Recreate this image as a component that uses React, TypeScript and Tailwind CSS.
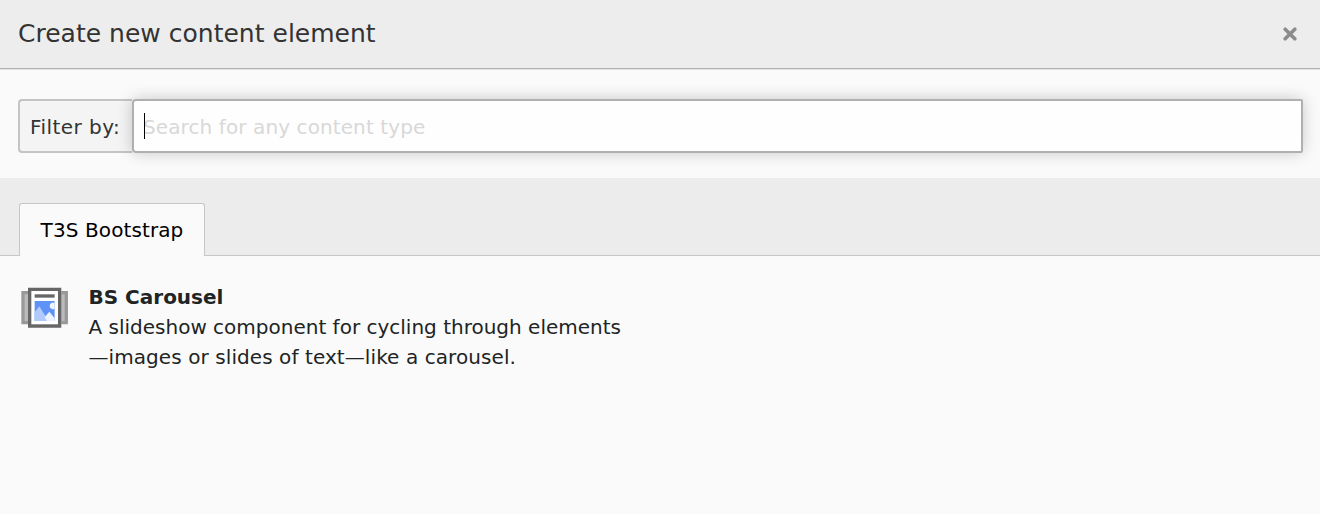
import React from 'react';

function CarouselIcon() {
  return (
    <svg viewBox="0 0 16 16" className="block size-[53.3px] shrink-0" aria-hidden="true">
      <path fill="#999" d="M1 3h2v10H1zM13 3h2v10h-2z" />
      <path fill="#bbb" d="M2 4h1v8H2zM13 4h1v8h-1z" />
      <path fill="#666" d="M3 2h10v12H3z" />
      <path fill="#fff" d="M4 3h8v10H4z" />
      <path fill="#666" d="M5 4h6v1H5z" />
      <path fill="#5E93F5" d="M5 6h6v6H5z" />
      <path fill="#B0CBFB" d="M5 9.4l1.4-1.8L9.2 12H5z" />
      <path fill="#EDF3FF" d="M8 10.9l1.4-1.7L11 11.2v.8H8.7z" />
      <path fill="#EDF3FF" d="M11 6.63a1 1 0 1 0 0 1.74z" />
    </svg>
  );
}

export default function App() {
  return (
    <div className="h-[514px] w-full overflow-hidden bg-[#fafafa] font-['DejaVu_Sans',Verdana,sans-serif] text-[20px] text-[#212424]">
      {/* Header */}
      <header className="flex h-[69px] items-center justify-between border-b border-[#b2b2b2] bg-[#ededed] pr-[23px] pb-[2px] pl-[18px] shadow-[0_1px_0_#e4e4e4]">
        <h1 className="text-[25px] leading-none tracking-[0.01px] whitespace-nowrap text-[#333]">Create new content element</h1>
        <button type="button" aria-label="Close" className="block pt-px">
          <svg viewBox="0 0 14 14" className="block size-[14px]">
            <path d="M2.2 2.2l9.6 9.6M11.8 2.2l-9.6 9.6" stroke="#8c8c8c" strokeWidth="3.6" strokeLinecap="round" />
          </svg>
        </button>
      </header>

      {/* Filter */}
      <div className="flex h-[109px] pt-[30px] pr-[17px] pl-[18px]">
        <label htmlFor="filter" className="flex h-[54px] w-[114px] shrink-0 items-center rounded-l-[4px] border-2 border-r-0 border-[#c4c4c4] bg-[#f4f4f4] pt-[2px] pl-[10px] tracking-[0.45px] whitespace-nowrap text-[#333]">
          Filter by:
        </label>
        <div className="relative flex h-[54px] flex-1 items-center rounded-r-[2px] rounded-l-[4px] border-2 border-[#b0b0b0] bg-[#fefefe] pt-[2px] pl-[9px] shadow-[0_0_16px_rgba(0,0,0,0.2)]">
          <span className="absolute top-[12px] left-[10px] h-[26px] w-px bg-black" />
          <input
            id="filter"
            type="text"
            placeholder="Search for any content type"
            className="w-full bg-transparent tracking-[0.1px] outline-none placeholder:text-[#d8d8d8]"
          />
        </div>
      </div>

      {/* Tabs */}
      <nav className="flex h-[78px] items-end bg-[#ececec]">
        <div className="h-full w-[19px] border-b border-[#c6c6c6]" />
        <button type="button" className="h-[53px] w-[186px] rounded-t-[3px] border border-b-0 border-[#c6c6c6] bg-[#fafafa] tracking-[0.1px] text-black">
          T3S Bootstrap
        </button>
        <div className="h-full flex-1 border-b border-[#c6c6c6]" />
      </nav>

      {/* Content elements */}
      <main className="flex pt-[25px] pl-[18px]">
        <CarouselIcon />
        <div className="ml-[17.2px] pt-px leading-[30px] whitespace-nowrap">
          <strong className="block font-bold">BS Carousel</strong>
          <p>
            A slideshow component for cycling through elements
            <br />
            <span className="tracking-[0.08px]">—images or slides of text—like a carousel.</span>
          </p>
        </div>
      </main>
    </div>
  );
}
